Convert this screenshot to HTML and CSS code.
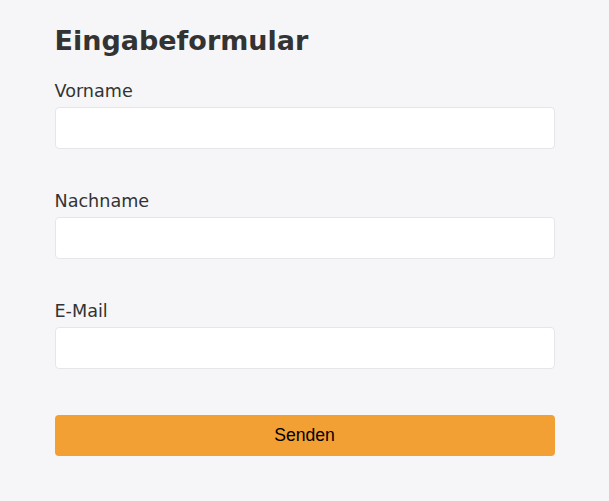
FILE: index.html
```html
<!DOCTYPE html>
<html lang="de">
<head>
<meta charset="utf-8">
<link rel="stylesheet" href="styles.css">
<title>Eingabeformular</title>
</head>
<body>
<form class="form">
  <h1 class="title">Eingabeformular</h1>
  <div class="field">
    <label class="label" for="vorname">Vorname</label>
    <input class="input" id="vorname" type="text">
  </div>
  <div class="field">
    <label class="label" for="nachname">Nachname</label>
    <input class="input" id="nachname" type="text">
  </div>
  <div class="field">
    <label class="label" for="email">E-Mail</label>
    <input class="input" id="email" type="email">
  </div>
  <button class="submit" type="button">Senden</button>
</form>
</body>
</html>
```
FILE: styles.css
```css
html, body {
  margin: 0;
  padding: 0;
  background: #f6f6f8;
}
body {
  font-family: "DejaVu Sans", Verdana, sans-serif;
  color: #333333;
}
.form {
  width: 500px;
  margin: 0 auto;
  padding-top: 25px;
  display: flex;
  flex-direction: column;
}
.title {
  margin: 0 0 23px;
  font-size: 27px;
  font-weight: bold;
  color: #333333;
}
.field {
  display: flex;
  flex-direction: column;
  margin-bottom: 40px;
}
.label {
  font-size: 17.6px;
  padding-top: 2px;
  margin-bottom: 6px;
}
.input {
  box-sizing: border-box;
  height: 42px;
  border: 1px solid #e6e6ea;
  border-radius: 4px;
  background: #ffffff;
}
.submit {
  margin-top: 6px;
  height: 41px;
  border: none;
  border-radius: 4px;
  background: #f29f33;
  color: #000000;
  font-family: "Liberation Sans", Arial, sans-serif;
  font-size: 17.6px;
}
```
